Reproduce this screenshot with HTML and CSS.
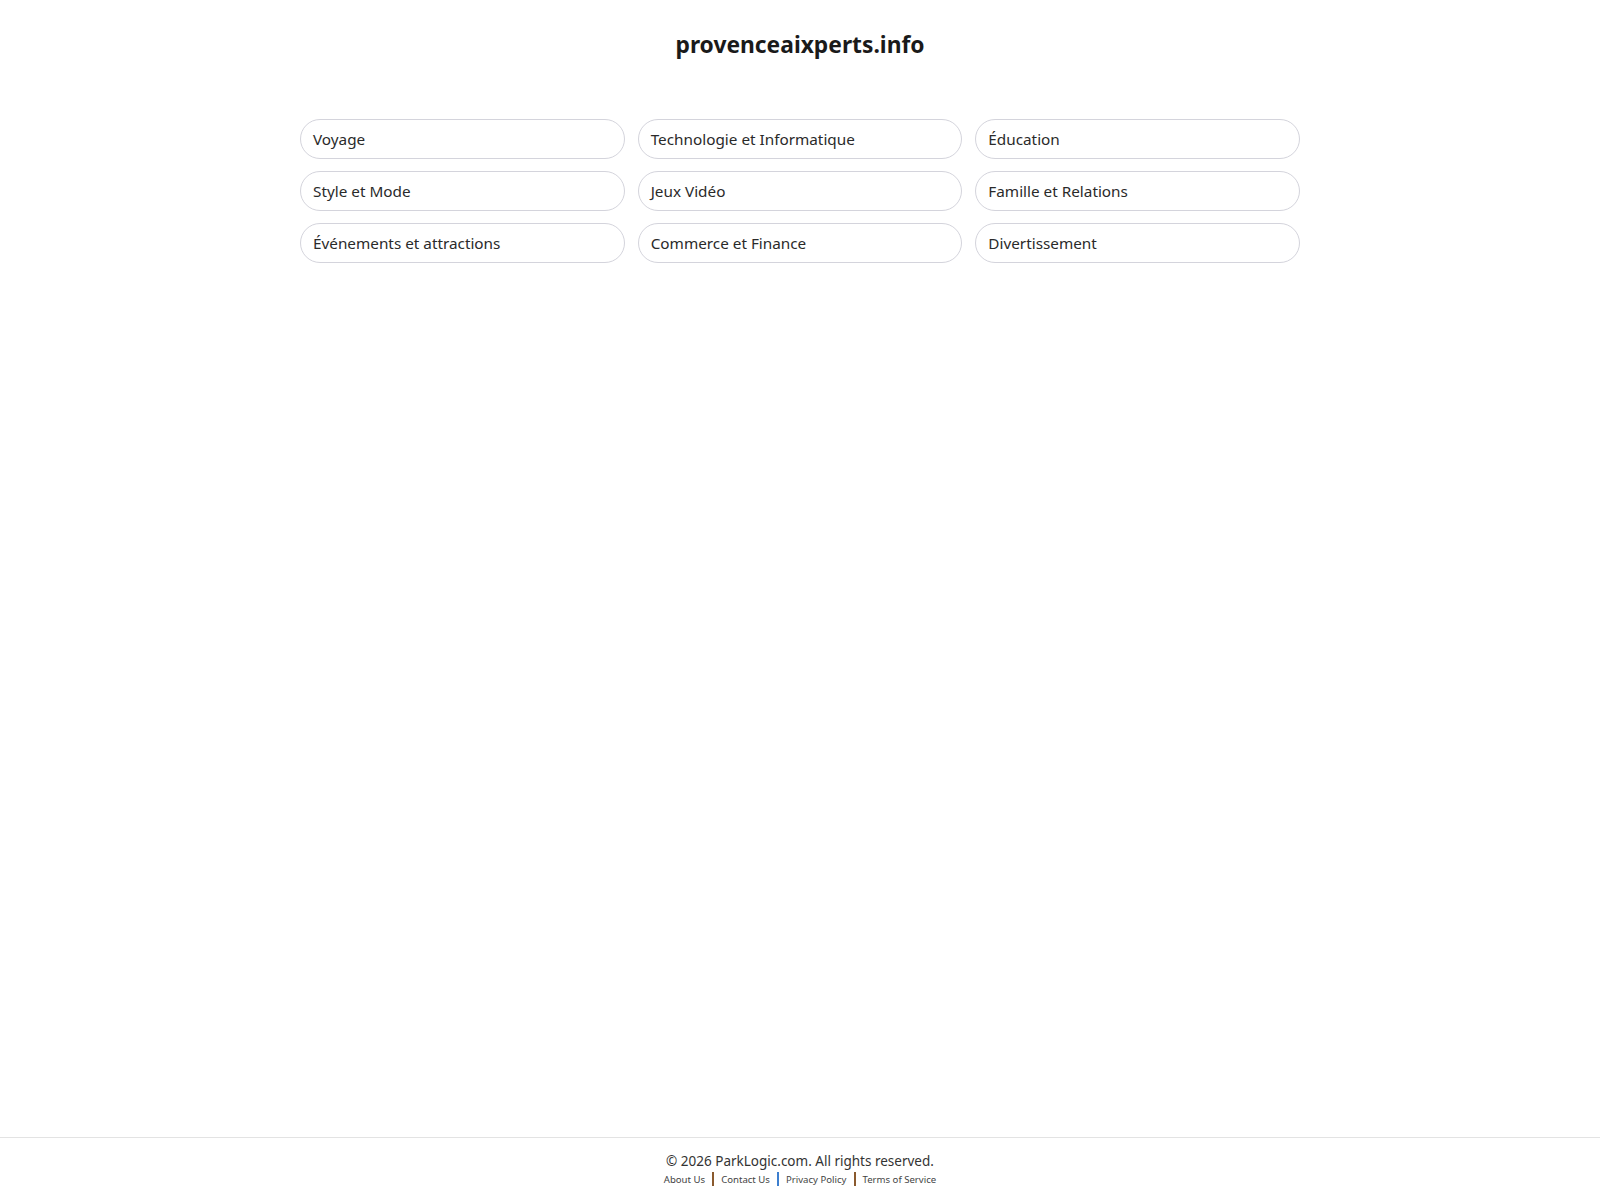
FILE: index.html
```html
<!DOCTYPE html>
<html lang="fr">
<head>
<meta charset="utf-8">
<title>provenceaixperts.info</title>
<link rel="stylesheet" href="styles.css">
</head>
<body>
<div class="page">
  <main class="main">
    <h1 class="title">provenceaixperts.info</h1>
    <div class="grid">
      <a class="pill" href="#">Voyage</a>
      <a class="pill" href="#">Technologie et Informatique</a>
      <a class="pill" href="#">Éducation</a>
      <a class="pill" href="#">Style et Mode</a>
      <a class="pill" href="#">Jeux Vidéo</a>
      <a class="pill" href="#">Famille et Relations</a>
      <a class="pill" href="#">Événements et attractions</a>
      <a class="pill" href="#">Commerce et Finance</a>
      <a class="pill" href="#">Divertissement</a>
    </div>
  </main>
  <footer class="footer">
    <div class="copy">© 2026 ParkLogic.com. All rights reserved.</div>
    <nav class="links">
      <a href="#">About Us</a><span class="sep sep-brown"></span><a href="#">Contact Us</a><span class="sep sep-blue"></span><a href="#">Privacy Policy</a><span class="sep sep-brown"></span><a href="#">Terms of Service</a>
    </nav>
  </footer>
</div>
</body>
</html>
```

FILE: styles.css
```css
html, body {
  margin: 0;
  padding: 0;
  background: #ffffff;
}
body {
  font-family: "Noto Sans", "Open Sans", sans-serif;
  color: #222222;
}
.page {
  min-height: 100vh;
  display: flex;
  flex-direction: column;
}
.main {
  flex: 1;
  display: flex;
  flex-direction: column;
  align-items: center;
}
.title {
  margin: 29px 0 0;
  font-size: 22.8px;
  line-height: 32px;
  font-weight: 700;
  color: #1a1a1a;
}
.grid {
  margin-top: 58px;
  width: 1000px;
  display: grid;
  grid-template-columns: repeat(3, 1fr);
  column-gap: 13px;
  row-gap: 12px;
}
.pill {
  display: flex;
  align-items: center;
  height: 40px;
  box-sizing: border-box;
  padding: 0 12px;
  border: 1px solid #d4d4dc;
  border-radius: 20px;
  font-size: 15.3px;
  color: #2a2a2a;
  text-decoration: none;
}
.footer {
  border-top: 1px solid #e3e3e3;
  padding: 13px 0 13px;
  text-align: center;
}
.copy {
  font-size: 13.5px;
  line-height: 20px;
  color: #333333;
}
.links {
  display: flex;
  justify-content: center;
  align-items: center;
  height: 16px;
}
.links a {
  font-size: 9.6px;
  color: #444444;
  text-decoration: none;
}
.sep {
  display: inline-block;
  width: 2px;
  height: 14px;
  margin: 0 7px;
}
.sep-brown { background: #8a5a2e; }
.sep-blue { background: #3d7fcf; }
```
